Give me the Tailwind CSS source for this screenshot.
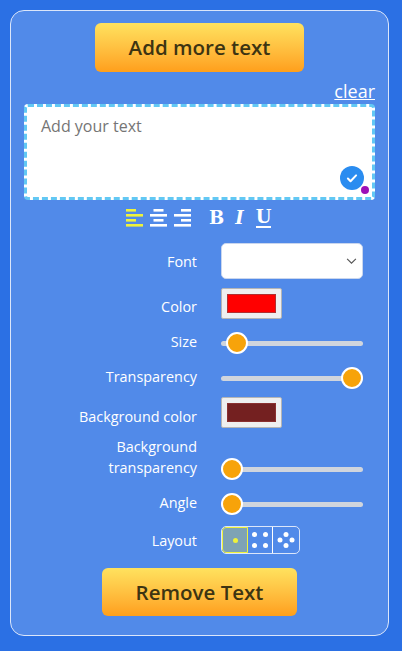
<!DOCTYPE html>
<html lang="en">
<head>
    <meta charset="UTF-8">
    <meta name="viewport" content="width=device-width, initial-scale=1.0">
    <title>Text editor</title>
    <script src="https://cdn.jsdelivr.net/npm/@tailwindcss/browser@4"></script>
</head>
<body class="h-[651px] overflow-hidden bg-[#2b70e4] p-[10px] font-['Open_Sans',sans-serif] text-white">
    <div class="flex h-[626px] w-[379px] flex-col rounded-[14px] border border-[#dbe6fa] bg-[#518ae9] px-[13px] pt-[12px]">
        <!-- top button -->
        <button class="mx-auto h-[49px] w-[209px] rounded-[6px] bg-gradient-to-b from-[#ffe25e] to-[#ff9f1a] text-[20.5px] font-semibold text-[#3d3412]">Add more text</button>

        <div class="mt-[7px] mb-[1px] h-[24px] text-right text-[18px] leading-[24px] underline">clear</div>

        <!-- text box -->
        <div class="relative h-[96px]">
            <textarea class="h-full w-[351px] resize-none rounded-[4px] border-[3px] border-dashed border-[#62c8f4] bg-white px-[14px] py-[7px] text-[16px] leading-[24px] outline-none placeholder:text-[#757575]" placeholder="Add your text"></textarea>
            <div class="absolute right-[11px] bottom-[10px] flex h-[24px] w-[24px] items-center justify-center rounded-full bg-[#2a8cf0]">
                <svg viewBox="0 0 24 24" class="h-[14px] w-[14px]" fill="none" stroke="#fff" stroke-width="3.5" stroke-linecap="round" stroke-linejoin="round"><path d="M5 13l4.5 4.5L19 7.5"/></svg>
            </div>
            <div class="absolute right-[6px] bottom-[6px] h-[8px] w-[8px] rounded-full bg-[#9c10b8]"></div>
        </div>

        <!-- formatting toolbar -->
        <div class="mt-[7px] flex h-[22px] items-center pl-[102px]">
            <svg viewBox="0 0 17 18" class="h-[18px] w-[17px]" fill="#eef23c"><rect x="0" y="0" width="10" height="2.6"/><rect x="0" y="5" width="17" height="2.6"/><rect x="0" y="10" width="10" height="2.6"/><rect x="0" y="15" width="17" height="2.6"/></svg>
            <svg viewBox="0 0 17 18" class="ml-[7px] h-[18px] w-[17px]" fill="#fff"><rect x="3.5" y="0" width="10" height="2.6"/><rect x="0" y="5" width="17" height="2.6"/><rect x="3.5" y="10" width="10" height="2.6"/><rect x="0" y="15" width="17" height="2.6"/></svg>
            <svg viewBox="0 0 17 18" class="ml-[7px] h-[18px] w-[17px]" fill="#fff"><rect x="7" y="0" width="10" height="2.6"/><rect x="0" y="5" width="17" height="2.6"/><rect x="7" y="10" width="10" height="2.6"/><rect x="0" y="15" width="17" height="2.6"/></svg>
            <span class="ml-[18px] font-['DejaVu_Serif',serif] text-[18px] leading-[22px] font-bold">B</span>
            <span class="ml-[11px] font-['DejaVu_Serif',serif] text-[18px] leading-[22px] font-bold italic">I</span>
            <span class="ml-[12px] border-b-2 border-white font-['DejaVu_Serif',serif] text-[18px] leading-[18px] font-bold">U</span>
        </div>

        <!-- settings -->
        <div class="mt-[14px] grid grid-cols-[173px_142px] gap-x-[24px] text-right text-[14.4px] leading-[21px]">
            <div class="flex h-[36px] items-center justify-end">Font</div>
            <div class="relative h-[36px]">
                <select class="h-full w-full appearance-none rounded-[5px] border border-[#c9d6ee] bg-white"></select>
                <svg viewBox="0 0 12 8" class="absolute top-[15px] right-[6px] h-[7px] w-[11px]" fill="none" stroke="#555" stroke-width="1.3"><path d="M1 1l5 5 5-5"/></svg>
            </div>

            <div class="mt-[9px] flex h-[31px] items-center justify-end pt-[6px]">Color</div>
            <div class="mt-[9px]">
                <button class="flex h-[31px] w-[61px] items-center justify-center rounded-[2px] border border-[#b5b5b5] bg-[#efefef]"><span class="h-[19px] w-[49px] border border-[#b03030] bg-[#ff0000]"></span></button>
            </div>

            <div class="mt-[9px] flex h-[30px] items-center justify-end pb-[4px]">Size</div>
            <div class="mt-[9px] flex h-[30px] items-center">
                <input type="range" value="4" class="h-[5px] w-full appearance-none rounded-full bg-[#d0d5dd] [&::-webkit-slider-thumb]:h-[22px] [&::-webkit-slider-thumb]:w-[22px] [&::-webkit-slider-thumb]:appearance-none [&::-webkit-slider-thumb]:rounded-full [&::-webkit-slider-thumb]:border-2 [&::-webkit-slider-thumb]:border-white [&::-webkit-slider-thumb]:bg-[#f7a30a]">
            </div>

            <div class="mt-[5px] flex h-[30px] items-center justify-end pb-[4px]">Transparency</div>
            <div class="mt-[5px] flex h-[30px] items-center">
                <input type="range" value="100" class="h-[5px] w-full appearance-none rounded-full bg-[#d0d5dd] [&::-webkit-slider-thumb]:h-[22px] [&::-webkit-slider-thumb]:w-[22px] [&::-webkit-slider-thumb]:appearance-none [&::-webkit-slider-thumb]:rounded-full [&::-webkit-slider-thumb]:border-2 [&::-webkit-slider-thumb]:border-white [&::-webkit-slider-thumb]:bg-[#f7a30a]">
            </div>

            <div class="mt-[4px] flex h-[31px] items-center justify-end pt-[7px]">Background color</div>
            <div class="mt-[4px]">
                <button class="flex h-[31px] w-[61px] items-center justify-center rounded-[2px] border border-[#b5b5b5] bg-[#efefef]"><span class="h-[19px] w-[49px] border border-[#8a3030] bg-[#742020]"></span></button>
            </div>

            <div class="mt-[8px] pl-[40px]">Background transparency</div>
            <div class="mt-[8px] flex items-end">
                <div class="flex h-[18px] w-full items-center">
                    <input type="range" value="0" class="h-[5px] w-full appearance-none rounded-full bg-[#d0d5dd] [&::-webkit-slider-thumb]:h-[22px] [&::-webkit-slider-thumb]:w-[22px] [&::-webkit-slider-thumb]:appearance-none [&::-webkit-slider-thumb]:rounded-full [&::-webkit-slider-thumb]:border-2 [&::-webkit-slider-thumb]:border-white [&::-webkit-slider-thumb]:bg-[#f7a30a]">
                </div>
            </div>

            <div class="mt-[11px] flex h-[30px] items-center justify-end pb-[4px]">Angle</div>
            <div class="mt-[11px] flex h-[30px] items-center">
                <input type="range" value="0" class="h-[5px] w-full appearance-none rounded-full bg-[#d0d5dd] [&::-webkit-slider-thumb]:h-[22px] [&::-webkit-slider-thumb]:w-[22px] [&::-webkit-slider-thumb]:appearance-none [&::-webkit-slider-thumb]:rounded-full [&::-webkit-slider-thumb]:border-2 [&::-webkit-slider-thumb]:border-white [&::-webkit-slider-thumb]:bg-[#f7a30a]">
            </div>

            <div class="mt-[7px] flex h-[28px] items-center justify-end">Layout</div>
            <div class="mt-[7px] flex h-[28px] w-[79px] overflow-hidden rounded-[5px] border border-[#dbe6fa]">
                <div class="flex w-[26px] items-center justify-center rounded-l-[4px] border border-[#eef23c] bg-[#7ea3b5]"><span class="h-[5px] w-[5px] rounded-full bg-[#eef23c]"></span></div>
                <svg viewBox="0 0 24 26" class="h-full w-[25px] border-r border-white" fill="#fff"><circle cx="6.5" cy="7.5" r="2.5"/><circle cx="17.5" cy="7.5" r="2.5"/><circle cx="6.5" cy="18.5" r="2.5"/><circle cx="17.5" cy="18.5" r="2.5"/></svg>
                <svg viewBox="0 0 26 26" class="h-full w-[26px]" fill="#fff"><circle cx="13" cy="7.5" r="2.5"/><circle cx="7" cy="13" r="2.5"/><circle cx="19" cy="13" r="2.5"/><circle cx="13" cy="18.5" r="2.5"/></svg>
            </div>
        </div>

        <button class="mx-auto mt-[14px] h-[48px] w-[195px] rounded-[6px] bg-gradient-to-b from-[#ffe25e] to-[#ff9f1a] text-[20.5px] font-semibold text-[#3d3412]">Remove Text</button>
    </div>
</body>
</html>
